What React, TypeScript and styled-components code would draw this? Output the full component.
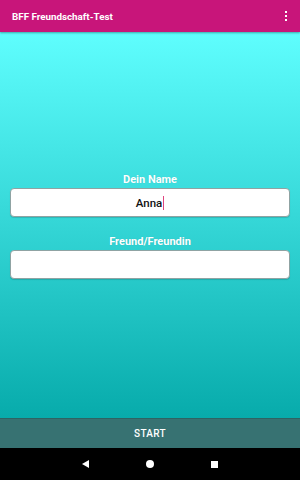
import React, { useState } from "react";
import styled, { createGlobalStyle } from "styled-components";

const GlobalStyle = createGlobalStyle`
  html, body {
    margin: 0;
    padding: 0;
    height: 100%;
  }
  body {
    font-family: Roboto, "Liberation Sans", sans-serif;
  }
  #root {
    height: 100%;
  }
`;

const Screen = styled.div`
  width: 300px;
  height: 480px;
  display: flex;
  flex-direction: column;
  overflow: hidden;
`;

const AppBar = styled.header`
  height: 32px;
  flex: 0 0 32px;
  background: #c8157a;
  display: flex;
  align-items: center;
  justify-content: space-between;
  padding: 0 9px 0 12px;
  box-shadow: 0 1px 2px rgba(0, 0, 0, 0.35);
  position: relative;
  z-index: 2;
`;

const Title = styled.h1`
  margin: 0;
  font-size: 9.8px;
  font-weight: 700;
  color: #fff;
`;

const MenuDots = styled.div`
  display: flex;
  flex-direction: column;
  gap: 1.5px;
  padding: 2px 4px;

  span {
    width: 2.5px;
    height: 2.5px;
    background: #fff;
  }
`;

const Body = styled.main`
  flex: 1;
  background: linear-gradient(180deg, #5ffefe 0%, #38dada 45%, #07abab 100%);
  display: flex;
  flex-direction: column;
  justify-content: center;
  padding: 0 10px;
`;

const Form = styled.div`
  display: flex;
  flex-direction: column;
  gap: 18px;
  margin-top: 2px;
`;

const Group = styled.div`
  display: flex;
  flex-direction: column;
  gap: 2px;
`;

const Label = styled.label`
  text-align: center;
  color: #fff;
  font-size: 11px;
  font-weight: 700;
  line-height: 13px;
  text-shadow: 0 0 1px rgba(0, 0, 0, 0.15);
`;

const Field = styled.div`
  box-sizing: border-box;
  height: 29px;
  border: 1px solid #8fa3a3;
  border-radius: 4px;
  background: #fff;
  display: flex;
  align-items: center;
  justify-content: center;
  font-size: 11.5px;
  font-weight: 500;
  color: #111;
  box-shadow: 0 1px 1px rgba(0, 0, 0, 0.15);
`;

const Caret = styled.span<{ $on: boolean }>`
  display: ${(p) => (p.$on ? "inline-block" : "none")};
  width: 1px;
  height: 14px;
  margin-left: 1px;
  background: #e0457f;
`;

const StartButton = styled.button`
  flex: 0 0 30px;
  height: 30px;
  border: none;
  border-top: 1px solid #2d6363;
  background: #377272;
  color: #fff;
  font-family: Roboto, "Liberation Sans", sans-serif;
  font-size: 10px;
  font-weight: 500;
  letter-spacing: 0.3px;
`;

const NavBar = styled.nav`
  flex: 0 0 32px;
  background: #000;
  display: flex;
  align-items: center;
  justify-content: center;
  gap: 57px;
  padding-right: 1px;
`;

const Back = styled.span`
  width: 0;
  height: 0;
  border-top: 4.5px solid transparent;
  border-bottom: 4.5px solid transparent;
  border-right: 7px solid #fff;
`;

const Home = styled.span`
  width: 8px;
  height: 8px;
  border-radius: 50%;
  background: #fff;
`;

const Recents = styled.span`
  width: 7px;
  height: 7px;
  background: #fff;
`;

const fields = [
  { label: "Dein Name", value: "Anna", focused: true },
  { label: "Freund/Freundin", value: "", focused: false },
];

export default function App() {
  const [active] = useState(0);

  return (
    <>
      <GlobalStyle />
      <Screen>
        <AppBar>
          <Title>BFF Freundschaft-Test</Title>
          <MenuDots>
            <span />
            <span />
            <span />
          </MenuDots>
        </AppBar>
        <Body>
          <Form>
            {fields.map((f, i) => (
              <Group key={f.label}>
                <Label>{f.label}</Label>
                <Field>
                  {f.value}
                  <Caret $on={i === active} />
                </Field>
              </Group>
            ))}
          </Form>
        </Body>
        <StartButton>START</StartButton>
        <NavBar>
          <Back />
          <Home />
          <Recents />
        </NavBar>
      </Screen>
    </>
  );
}
